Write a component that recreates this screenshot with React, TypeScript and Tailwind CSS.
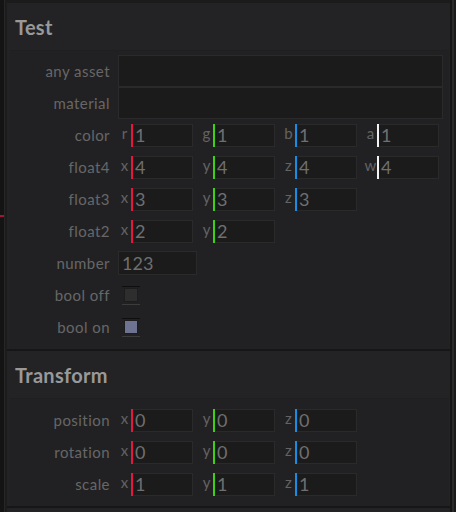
import React from "react";

const font = { fontFamily: "Lato, 'Noto Sans', sans-serif" };

type Comp = { l: string; c: string; v: string };

const R = "bg-[#e8163e]";
const G = "bg-[#3ed113]";
const B = "bg-[#168ee6]";
const W = "bg-[#f2f2f2]";

function Label({ children }: { children: React.ReactNode }) {
  return (
    <div className="w-[100px] shrink-0 text-right text-[15px] text-[#676767] leading-[19px] tracking-[0.45px]">
      {children}
    </div>
  );
}

function VecField({ l, c, v }: Comp) {
  return (
    <div className="flex w-[75px] h-[23px] items-start">
      <div className="w-[13px] text-center text-[15px] leading-[18px] text-[#636363]">{l}</div>
      <div className="relative w-[62px] h-[23px] bg-[#1b1b1b] border border-[#2a2a2a] flex">
        <div className={`absolute left-[-1px] top-[-1px] w-[2px] h-[23px] ${c}`} />
        <div className="pl-[3px] text-[18px] leading-[21px] text-[#6f6f6f]">{v}</div>
      </div>
    </div>
  );
}

function VecRow({ label, comps }: { label: string; comps: Comp[] }) {
  return (
    <div className="flex items-center h-[32px]">
      <Label>{label}</Label>
      <div className="flex gap-[7px] ml-[8px]">
        {comps.map((c, i) => (
          <VecField key={i} {...c} />
        ))}
      </div>
    </div>
  );
}

function AssetRow({ label }: { label: string }) {
  return (
    <div className="flex items-center h-[32px]">
      <Label>{label}</Label>
      <div className="ml-[8px] w-[325px] h-[32px] bg-[#1b1b1b] border border-[#2a2a2a]" />
    </div>
  );
}

function BoolRow({ label, on }: { label: string; on: boolean }) {
  return (
    <div className="flex items-center h-[32px]">
      <Label>{label}</Label>
      <div className="ml-[12px] w-[18px] h-[19px] border-t border-t-[#0e0e0e] border-b border-b-[#3c3c3c] flex items-center justify-center">
        <div
          className={`w-[14px] h-[14px] border border-[#1d1d1d] ${on ? "bg-[#6e7391]" : "bg-[#2e2e2e]"}`}
        />
      </div>
    </div>
  );
}

function Header({ title }: { title: string }) {
  return (
    <div className="h-[47px] flex items-center pl-[8px] text-[20px] font-bold text-[#999999] tracking-[0.3px]">
      {title}
    </div>
  );
}

export default function App() {
  return (
    <div className="w-[456px] h-[512px] bg-[#1a1a1a] flex overflow-hidden" style={font}>
      <div className="relative w-[4px] h-full bg-[#141414]">
        <div className="absolute left-0 top-[215px] w-[4px] h-[2px] bg-[#a3163a]" />
      </div>
      <div className="w-[1px] h-full bg-[#262626]" />
      <div className="w-[2px] h-full bg-[#1c1c1c]" />
      <div className="flex-1 flex flex-col">
        <div className="h-[3px] bg-[#1b1b1b]" />
        <div className="bg-[#232325]">
          <Header title="Test" />
          <div className="ml-[3px] mr-[1px] bg-[#212123] border-t border-[#1f1f20] pt-[4px] pb-[6px]">
            <AssetRow label="any asset" />
            <AssetRow label="material" />
            <VecRow
              label="color"
              comps={[
                { l: "r", c: R, v: "1" },
                { l: "g", c: G, v: "1" },
                { l: "b", c: B, v: "1" },
                { l: "a", c: W, v: "1" },
              ]}
            />
            <VecRow
              label="float4"
              comps={[
                { l: "x", c: R, v: "4" },
                { l: "y", c: G, v: "4" },
                { l: "z", c: B, v: "4" },
                { l: "w", c: W, v: "4" },
              ]}
            />
            <VecRow
              label="float3"
              comps={[
                { l: "x", c: R, v: "3" },
                { l: "y", c: G, v: "3" },
                { l: "z", c: B, v: "3" },
              ]}
            />
            <VecRow
              label="float2"
              comps={[
                { l: "x", c: R, v: "2" },
                { l: "y", c: G, v: "2" },
              ]}
            />
            <div className="flex items-center h-[32px]">
              <Label>number</Label>
              <div className="ml-[8px] w-[79px] h-[24px] bg-[#1b1b1b] border border-[#2a2a2a] pl-[3px] text-[18px] leading-[22px] text-[#6f6f6f]">
                123
              </div>
            </div>
            <BoolRow label="bool off" on={false} />
            <BoolRow label="bool on" on={true} />
          </div>
        </div>
        <div className="h-[2px] bg-[#161616]" />
        <div className="bg-[#232325] flex-1 flex flex-col">
          <Header title="Transform" />
          <div className="ml-[3px] mr-[1px] bg-[#212123] border-t border-[#1f1f20] pt-[5px] pb-[6px]">
            <VecRow
              label="position"
              comps={[
                { l: "x", c: R, v: "0" },
                { l: "y", c: G, v: "0" },
                { l: "z", c: B, v: "0" },
              ]}
            />
            <VecRow
              label="rotation"
              comps={[
                { l: "x", c: R, v: "0" },
                { l: "y", c: G, v: "0" },
                { l: "z", c: B, v: "0" },
              ]}
            />
            <VecRow
              label="scale"
              comps={[
                { l: "x", c: R, v: "1" },
                { l: "y", c: G, v: "1" },
                { l: "z", c: B, v: "1" },
              ]}
            />
          </div>
          <div className="h-[2px] bg-[#161616]" />
          <div className="flex-1 bg-[#232325]" />
        </div>
      </div>
      <div className="w-[2px] h-full bg-[#151515]" />
      <div className="w-[2px] h-full bg-[#2a2a2a]" />
      <div className="w-[2px] h-full bg-[#1a1a1a]" />
    </div>
  );
}
